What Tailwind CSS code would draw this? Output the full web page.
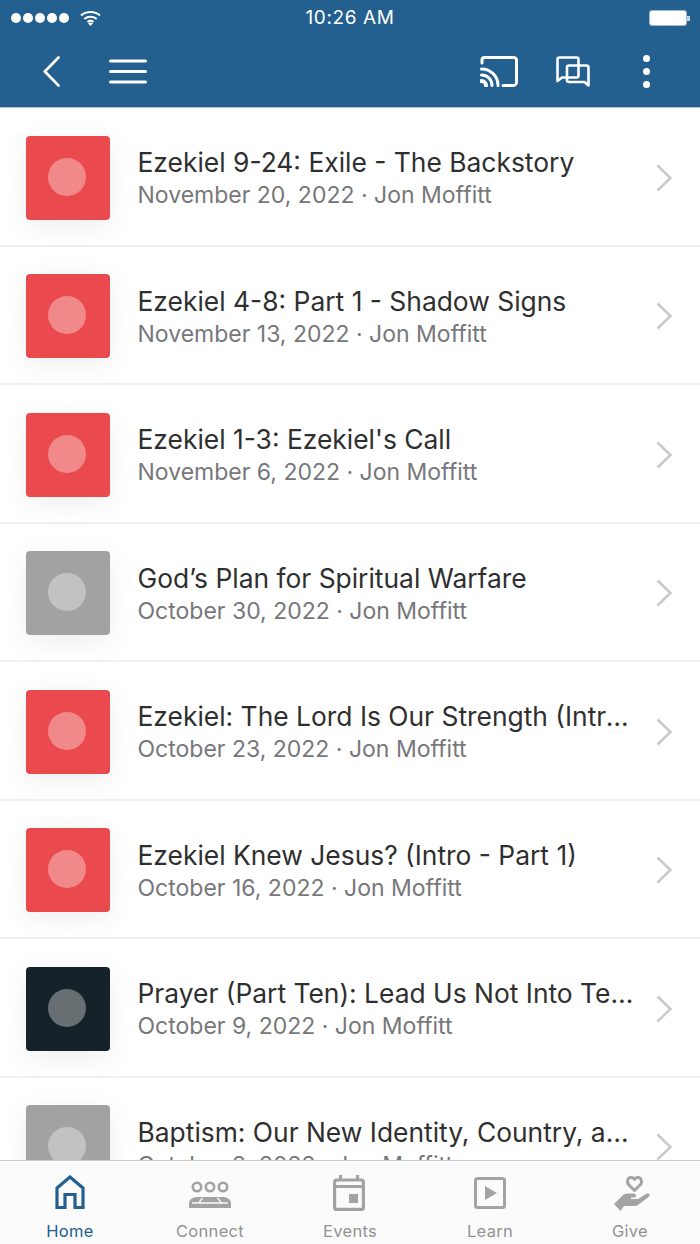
<!DOCTYPE html>
<html lang="en">

<head>
    <meta charset="UTF-8">
    <title>Sermons</title>
    <script src="https://cdn.jsdelivr.net/npm/@tailwindcss/browser@4"></script>
</head>

<body class="bg-white font-['Inter',sans-serif]">
    <div class="w-[700px] h-[1244px] flex flex-col overflow-hidden">
        <!-- Header -->
        <div class="h-[108px] shrink-0 bg-[#23608f] border-b border-[#a9c3d8] text-white">
            <!-- Status bar -->
            <div class="h-9 pl-[11px] pr-[10px] flex items-center justify-between relative">
                <div class="flex items-center gap-[2px]">
                    <span class="w-[10px] h-[10px] rounded-full bg-white"></span>
                    <span class="w-[10px] h-[10px] rounded-full bg-white"></span>
                    <span class="w-[10px] h-[10px] rounded-full bg-white"></span>
                    <span class="w-[10px] h-[10px] rounded-full bg-white"></span>
                    <span class="w-[10px] h-[10px] rounded-full bg-white"></span>
                    <svg class="ml-[9px]" width="21" height="16" viewBox="0 0 21 16" fill="none" stroke="white" stroke-width="2">
                        <path d="M1 5.5C6.5 .8 14.500 .8 20 5.500"/>
                        <path d="M4.300 9C7.800 6 13.200 6 16.700 9"/>
                        <path d="M7.500 12C9.300 10.600 11.700 10.600 13.500 12"/>
                        <path d="M10.500 16L8 13.200C9.500 12.300 11.500 12.300 13 13.200Z" fill="white" stroke="none"/>
                    </svg>
                </div>
                <span class="absolute left-0 right-0 text-center text-[19px] tracking-[0.6px]">10:26 AM</span>
                <div class="flex items-center">
                    <div class="w-[38px] h-[16px] rounded-[3px] border border-[#9db8cf] bg-white"></div>
                    <div class="w-[3px] h-[5px] bg-[#c5d5e3]"></div>
                </div>
            </div>
            <!-- Toolbar -->
            <div class="h-[71px] flex items-center pl-[43px] pr-[53px]">
                <svg width="17" height="31" viewBox="0 0 17 31" fill="none" stroke="white" stroke-width="2.600" stroke-linecap="round" stroke-linejoin="round">
                    <path d="M15.500 1.500L1.800 15.500L15.500 29.500"/>
                </svg>
                <svg class="ml-[49px]" width="38" height="25" viewBox="0 0 38 25" fill="none" stroke="white" stroke-width="3" stroke-linecap="round">
                    <path d="M1.500 2H36.500M1.500 12.500H36.500M1.500 23H36.500"/>
                </svg>
                <svg class="ml-auto" width="38" height="31" viewBox="0 0 38 31" fill="none" stroke="white" stroke-width="3" stroke-linecap="round" stroke-linejoin="round">
                    <path d="M2 7V4C2 2.500 3 1.500 4.500 1.500H33.500C35 1.500 36.500 2.500 36.500 4V26.500C36.500 28 35 29.500 33.500 29.500H23"/>
                    <path d="M1.500 13C10.500 13 18 20 18 29.500"/>
                    <path d="M1.500 19C7.500 19 12 23.500 12 29.500"/>
                    <path d="M1.500 25C4 25 6 27 6 29.500" stroke-width="4"/>
                </svg>
                <svg class="ml-[38px]" width="34" height="31" viewBox="0 0 34 31" fill="none" stroke="white" stroke-width="2.600" stroke-linejoin="round">
                    <path d="M6 21.500L1.500 25V3.500C1.500 2.300 2.300 1.500 3.500 1.500H20.500C21.700 1.500 22.500 2.300 22.500 3.500V19.500C22.500 20.700 21.700 21.500 20.500 21.500Z"/>
                    <path d="M13 9.500H30.500C31.700 9.500 32.500 10.300 32.500 11.500V29.500L28.500 26H13C11.800 26 11 25.200 11 24V11.500C11 10.300 11.800 9.500 13 9.500Z"/>
                </svg>
                <div class="ml-[53px] w-[8px] flex flex-col gap-[6px] mr-[-4px]">
                    <span class="w-[7px] h-[7px] rounded-full bg-white"></span>
                    <span class="w-[7px] h-[7px] rounded-full bg-white"></span>
                    <span class="w-[7px] h-[7px] rounded-full bg-white"></span>
                </div>
            </div>
        </div>

        <!-- Sermon list -->
        <div class="flex-1 min-h-0 overflow-hidden">
            <div class="h-[138.500px] pt-[3px] pl-[26px] pr-[27px] flex items-center border-b-2 border-[#f0f0f0]">
                <div class="w-[84px] h-[84px] shrink-0 rounded-[4px] bg-[#ea4a4e] shadow-[0_6px_30px_rgba(0,0,0,0.07)] flex items-center justify-center">
                    <span class="w-[38px] h-[38px] mr-[2px] mb-[2px] rounded-full bg-white/35"></span>
                </div>
                <div class="ml-[27.500px] mt-[2px] flex-1 min-w-0">
                    <p class="text-[26.400px] leading-[33px] text-[#2f2f2f] truncate">Ezekiel 9-24: Exile - The Backstory</p>
                    <p class="mt-[1px] text-[23px] leading-[31px] text-[#77777b] truncate">November 20, 2022 · Jon Moffitt</p>
                </div>
                <svg class="ml-[20px] shrink-0" width="17" height="28" viewBox="0 0 17 28" fill="none" stroke="#c8c8cd" stroke-width="2.500"><path d="M1.500 1.500L14.500 14L1.500 26.500"/></svg>
            </div>
            <div class="h-[138.500px] pt-[3px] pl-[26px] pr-[27px] flex items-center border-b-2 border-[#f0f0f0]">
                <div class="w-[84px] h-[84px] shrink-0 rounded-[4px] bg-[#ea4a4e] shadow-[0_6px_30px_rgba(0,0,0,0.07)] flex items-center justify-center">
                    <span class="w-[38px] h-[38px] mr-[2px] mb-[2px] rounded-full bg-white/35"></span>
                </div>
                <div class="ml-[27.500px] mt-[2px] flex-1 min-w-0">
                    <p class="text-[26.400px] leading-[33px] text-[#2f2f2f] truncate">Ezekiel 4-8: Part 1 - Shadow Signs</p>
                    <p class="mt-[1px] text-[23px] leading-[31px] text-[#77777b] truncate">November 13, 2022 · Jon Moffitt</p>
                </div>
                <svg class="ml-[20px] shrink-0" width="17" height="28" viewBox="0 0 17 28" fill="none" stroke="#c8c8cd" stroke-width="2.500"><path d="M1.500 1.500L14.500 14L1.500 26.500"/></svg>
            </div>
            <div class="h-[138.500px] pt-[3px] pl-[26px] pr-[27px] flex items-center border-b-2 border-[#f0f0f0]">
                <div class="w-[84px] h-[84px] shrink-0 rounded-[4px] bg-[#ea4a4e] shadow-[0_6px_30px_rgba(0,0,0,0.07)] flex items-center justify-center">
                    <span class="w-[38px] h-[38px] mr-[2px] mb-[2px] rounded-full bg-white/35"></span>
                </div>
                <div class="ml-[27.500px] mt-[2px] flex-1 min-w-0">
                    <p class="text-[26.400px] leading-[33px] text-[#2f2f2f] truncate">Ezekiel 1-3: Ezekiel's Call</p>
                    <p class="mt-[1px] text-[23px] leading-[31px] text-[#77777b] truncate">November 6, 2022 · Jon Moffitt</p>
                </div>
                <svg class="ml-[20px] shrink-0" width="17" height="28" viewBox="0 0 17 28" fill="none" stroke="#c8c8cd" stroke-width="2.500"><path d="M1.500 1.500L14.500 14L1.500 26.500"/></svg>
            </div>
            <div class="h-[138.500px] pt-[3px] pl-[26px] pr-[27px] flex items-center border-b-2 border-[#f0f0f0]">
                <div class="w-[84px] h-[84px] shrink-0 rounded-[4px] bg-[#a3a2a3] shadow-[0_6px_30px_rgba(0,0,0,0.07)] flex items-center justify-center">
                    <span class="w-[38px] h-[38px] mr-[2px] mb-[2px] rounded-full bg-white/35"></span>
                </div>
                <div class="ml-[27.500px] mt-[2px] flex-1 min-w-0">
                    <p class="text-[26.400px] leading-[33px] text-[#2f2f2f] truncate">God’s Plan for Spiritual Warfare</p>
                    <p class="mt-[1px] text-[23px] leading-[31px] text-[#77777b] truncate">October 30, 2022 · Jon Moffitt</p>
                </div>
                <svg class="ml-[20px] shrink-0" width="17" height="28" viewBox="0 0 17 28" fill="none" stroke="#c8c8cd" stroke-width="2.500"><path d="M1.500 1.500L14.500 14L1.500 26.500"/></svg>
            </div>
            <div class="h-[138.500px] pt-[3px] pl-[26px] pr-[27px] flex items-center border-b-2 border-[#f0f0f0]">
                <div class="w-[84px] h-[84px] shrink-0 rounded-[4px] bg-[#ea4a4e] shadow-[0_6px_30px_rgba(0,0,0,0.07)] flex items-center justify-center">
                    <span class="w-[38px] h-[38px] mr-[2px] mb-[2px] rounded-full bg-white/35"></span>
                </div>
                <div class="ml-[27.500px] mt-[2px] flex-1 min-w-0">
                    <p class="text-[26.400px] leading-[33px] text-[#2f2f2f] truncate">Ezekiel: The Lord Is Our Strength (Intro - Part 2)</p>
                    <p class="mt-[1px] text-[23px] leading-[31px] text-[#77777b] truncate">October 23, 2022 · Jon Moffitt</p>
                </div>
                <svg class="ml-[20px] shrink-0" width="17" height="28" viewBox="0 0 17 28" fill="none" stroke="#c8c8cd" stroke-width="2.500"><path d="M1.500 1.500L14.500 14L1.500 26.500"/></svg>
            </div>
            <div class="h-[138.500px] pt-[3px] pl-[26px] pr-[27px] flex items-center border-b-2 border-[#f0f0f0]">
                <div class="w-[84px] h-[84px] shrink-0 rounded-[4px] bg-[#ea4a4e] shadow-[0_6px_30px_rgba(0,0,0,0.07)] flex items-center justify-center">
                    <span class="w-[38px] h-[38px] mr-[2px] mb-[2px] rounded-full bg-white/35"></span>
                </div>
                <div class="ml-[27.500px] mt-[2px] flex-1 min-w-0">
                    <p class="text-[26.400px] leading-[33px] text-[#2f2f2f] truncate">Ezekiel Knew Jesus? (Intro - Part 1)</p>
                    <p class="mt-[1px] text-[23px] leading-[31px] text-[#77777b] truncate">October 16, 2022 · Jon Moffitt</p>
                </div>
                <svg class="ml-[20px] shrink-0" width="17" height="28" viewBox="0 0 17 28" fill="none" stroke="#c8c8cd" stroke-width="2.500"><path d="M1.500 1.500L14.500 14L1.500 26.500"/></svg>
            </div>
            <div class="h-[138.500px] pt-[3px] pl-[26px] pr-[27px] flex items-center border-b-2 border-[#f0f0f0]">
                <div class="w-[84px] h-[84px] shrink-0 rounded-[4px] bg-[#162229] shadow-[0_6px_30px_rgba(0,0,0,0.07)] flex items-center justify-center">
                    <span class="w-[38px] h-[38px] mr-[2px] mb-[2px] rounded-full bg-white/35"></span>
                </div>
                <div class="ml-[27.500px] mt-[2px] flex-1 min-w-0">
                    <p class="text-[26.400px] leading-[33px] text-[#2f2f2f] truncate">Prayer (Part Ten): Lead Us Not Into Temptation</p>
                    <p class="mt-[1px] text-[23px] leading-[31px] text-[#77777b] truncate">October 9, 2022 · Jon Moffitt</p>
                </div>
                <svg class="ml-[20px] shrink-0" width="17" height="28" viewBox="0 0 17 28" fill="none" stroke="#c8c8cd" stroke-width="2.500"><path d="M1.500 1.500L14.500 14L1.500 26.500"/></svg>
            </div>
            <div class="h-[138.500px] pt-[3px] pl-[26px] pr-[27px] flex items-center border-b-2 border-[#f0f0f0]">
                <div class="w-[84px] h-[84px] shrink-0 rounded-[4px] bg-[#a3a2a3] shadow-[0_6px_30px_rgba(0,0,0,0.07)] flex items-center justify-center">
                    <span class="w-[38px] h-[38px] mr-[2px] mb-[2px] rounded-full bg-white/35"></span>
                </div>
                <div class="ml-[27.500px] mt-[2px] flex-1 min-w-0">
                    <p class="text-[26.400px] leading-[33px] text-[#2f2f2f] truncate">Baptism: Our New Identity, Country, and Family</p>
                    <p class="mt-[1px] text-[23px] leading-[31px] text-[#77777b] truncate">October 2, 2022 · Jon Moffitt</p>
                </div>
                <svg class="ml-[20px] shrink-0" width="17" height="28" viewBox="0 0 17 28" fill="none" stroke="#c8c8cd" stroke-width="2.500"><path d="M1.500 1.500L14.500 14L1.500 26.500"/></svg>
            </div>
        </div>

        <!-- Tab bar -->
        <div class="h-[84px] shrink-0 bg-[#fbfbfb] border-t border-[#c9c9c9] grid grid-cols-5 text-[16.500px] leading-[20px] text-[#929292] tracking-[0.3px]">
            <div class="flex flex-col items-center">
                <svg class="mt-[14px]" width="30" height="34" viewBox="0 0 30 34" fill="none" stroke="#23608f" stroke-width="3.200">
                    <path d="M2 32.500V13L15 2L28 13V32.500H20V19.500H10V32.500Z"/>
                </svg>
                <span class="mt-[12px] text-[#23608f]">Home</span>
            </div>
            <div class="flex flex-col items-center">
                <svg class="mt-[18px]" width="44" height="30" viewBox="0 0 44 30" fill="#a3a3a3">
                    <circle cx="9" cy="8" r="4.200" fill="none" stroke="#a3a3a3" stroke-width="2.600"/>
                    <circle cx="22" cy="8" r="4.200" fill="none" stroke="#a3a3a3" stroke-width="2.600"/>
                    <circle cx="35" cy="8" r="4.200" fill="none" stroke="#a3a3a3" stroke-width="2.600"/>
                    <path d="M1 29V25C1 21 4 18 9 18H35C40 18 43 21 43 25V29Z"/>
                    <path d="M14.500 19L10.500 24H33.500L29.500 19M4 24H10.500M33.500 24H40" fill="none" stroke="#fbfbfb" stroke-width="1.400"/>
                </svg>
                <span class="mt-[12px]">Connect</span>
            </div>
            <div class="flex flex-col items-center">
                <svg class="mt-[14px] mr-[2px]" width="32" height="36" viewBox="0 0 32 36" fill="none" stroke="#a3a3a3" stroke-width="3.200">
                    <rect x="1.600" y="5" width="28.800" height="29.400" rx="2"/>
                    <path d="M1.600 11.500H30.400M7.500 0V6M24.500 0V6"/>
                    <rect x="16" y="19" width="9" height="9" fill="#a3a3a3" stroke="none"/>
                </svg>
                <span class="mt-[10px]">Events</span>
            </div>
            <div class="flex flex-col items-center">
                <svg class="mt-[16px]" width="32" height="32" viewBox="0 0 32 32" fill="none" stroke="#a3a3a3" stroke-width="3">
                    <rect x="1.500" y="1.500" width="29" height="29" rx="2"/>
                    <path d="M11 9L23 16L11 23Z" fill="#a3a3a3" stroke="none"/>
                </svg>
                <span class="mt-[12px]">Learn</span>
            </div>
            <div class="flex flex-col items-center">
                <svg class="mt-[14px] ml-[4px]" width="36" height="36" viewBox="0 0 36 36" fill="none">
                    <path d="M20.500 15.500L14.500 9.500C12.500 7 13.500 2.500 17 2.500C18.500 2.500 20 3.200 20.500 4.500C21 3.200 22.500 2.500 24 2.500C27.500 2.500 28.500 7 26.500 9.500Z" stroke="#a3a3a3" stroke-width="3" stroke-linejoin="round"/>
                    <path d="M0 29L9 20C10.500 19 12 18.500 14 18.500H20C22 18.500 22.500 22 21 22.500H17V24H24L32 19C35 17.500 37 20 34.500 22L24 30C23 30.700 22 31 21 31H10L6.500 36Z" fill="#a3a3a3"/>
                </svg>
                <span class="mt-[10px]">Give</span>
            </div>
        </div>
    </div>
</body>

</html>
